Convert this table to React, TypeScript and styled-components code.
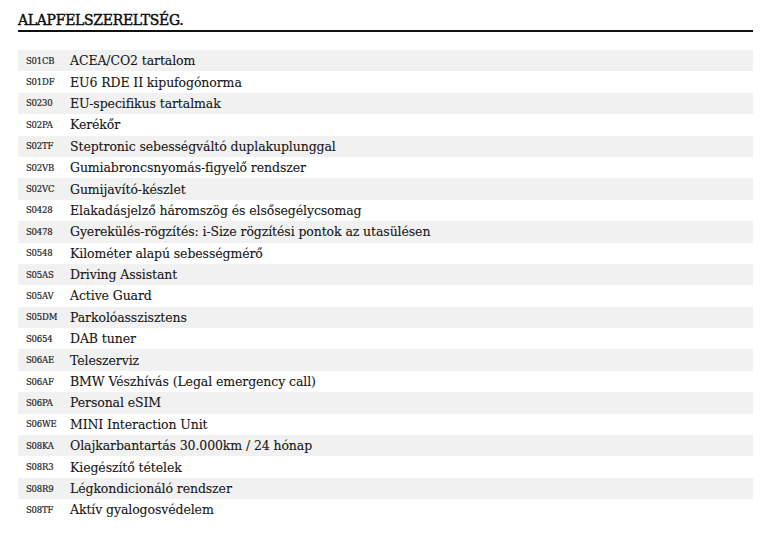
import * as React from "react";
import styled, { createGlobalStyle } from "styled-components";

const GlobalStyle = createGlobalStyle`
  body {
    margin: 0;
    background: #ffffff;
    color: #161616;
    font-family: "DejaVu Serif", "Liberation Serif", serif;
  }
`;

const items: [string, string][] = [
  ["S01CB", "ACEA/CO2 tartalom"],
  ["S01DF", "EU6 RDE II kipufogónorma"],
  ["S0230", "EU-specifikus tartalmak"],
  ["S02PA", "Kerékőr"],
  ["S02TF", "Steptronic sebességváltó duplakuplunggal"],
  ["S02VB", "Gumiabroncsnyomás-figyelő rendszer"],
  ["S02VC", "Gumijavító-készlet"],
  ["S0428", "Elakadásjelző háromszög és elsősegélycsomag"],
  ["S0478", "Gyerekülés-rögzítés: i-Size rögzítési pontok az utasülésen"],
  ["S0548", "Kilométer alapú sebességmérő"],
  ["S05AS", "Driving Assistant"],
  ["S05AV", "Active Guard"],
  ["S05DM", "Parkolóasszisztens"],
  ["S0654", "DAB tuner"],
  ["S06AE", "Teleszerviz"],
  ["S06AF", "BMW Vészhívás (Legal emergency call)"],
  ["S06PA", "Personal eSIM"],
  ["S06WE", "MINI Interaction Unit"],
  ["S08KA", "Olajkarbantartás 30.000km / 24 hónap"],
  ["S08R3", "Kiegészítő tételek"],
  ["S08R9", "Légkondicionáló rendszer"],
  ["S08TF", "Aktív gyalogosvédelem"],
];

const Page = styled.div`
  padding: 12px 13px 0 18px;
`;

const Title = styled.h2`
  margin: 0;
  font-size: 14px;
  font-weight: normal;
  letter-spacing: -0.3px;
  line-height: 17px;
  padding-bottom: 1px;
  color: #0e0e0e;
  -webkit-text-stroke: 0.45px #0e0e0e;
  border-bottom: 2px solid #111;
`;

const List = styled.div`
  margin-top: 18px;
  display: flex;
  flex-direction: column;
`;

const Row = styled.div<{ $shaded: boolean }>`
  display: flex;
  align-items: center;
  height: 21.4px;
  background: ${(p) => (p.$shaded ? "#f1f1f1" : "transparent")};
`;

const Code = styled.span`
  width: 44px;
  padding-left: 8px;
  font-size: 8.5px;
  color: #1e1e1e;
  letter-spacing: -0.2px;
  -webkit-text-stroke: 0.2px #1e1e1e;
`;

const Name = styled.span`
  font-size: 12.5px;
  letter-spacing: -0.1px;
  -webkit-text-stroke: 0.1px #161616;
`;

export default function App() {
  return (
    <>
      <GlobalStyle />
      <Page>
        <Title>ALAPFELSZERELTSÉG.</Title>
        <List>
          {items.map(([code, name], i) => (
            <Row key={code} $shaded={i % 2 === 0}>
              <Code>{code}</Code>
              <Name>{name}</Name>
            </Row>
          ))}
        </List>
      </Page>
    </>
  );
}
